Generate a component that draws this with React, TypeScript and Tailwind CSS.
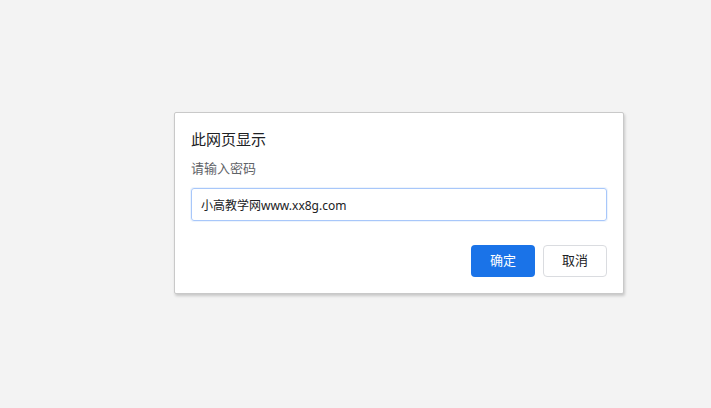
import React from "react";

export default function App() {
  const font = { fontFamily: '"Noto Sans", "Noto Sans CJK SC", sans-serif' };
  return (
    <div className="w-[711px] h-[408px] bg-[#f3f3f3] overflow-hidden pt-[112px] pl-[174px]" style={font}>
      <div className="w-[450px] h-[182px] bg-white border border-[#c9c9c9] rounded-[2px] shadow-[1px_2px_3px_rgba(0,0,0,0.18)] px-[16px] pt-[16px] pb-[16px] flex flex-col">
        <div className="text-[15px] leading-[20px] text-[#202124]">此网页显示</div>
        <div className="mt-[10px] text-[13px] leading-[18px] text-[#5f6368]">请输入密码</div>
        <input
          className="mt-[11px] h-[33px] w-full border border-[#a8c7fa] rounded-[3px] px-[9px] text-[12px] text-[#202124] outline-none shadow-[0_0_0_1px_rgba(26,115,232,0.08)]"
          defaultValue="小高教学网www.xx8g.com"
          style={font}
        />
        <div className="mt-auto flex justify-end gap-[8px]">
          <button className="w-[64px] h-[32px] rounded-[4px] bg-[#1a73e8] text-white text-[13px]" style={font}>确定</button>
          <button className="w-[64px] h-[32px] rounded-[4px] bg-white border border-[#dadce0] text-[#202124] text-[13px]" style={font}>取消</button>
        </div>
      </div>
    </div>
  );
}
